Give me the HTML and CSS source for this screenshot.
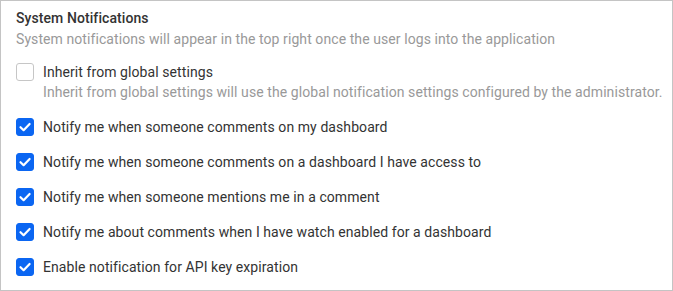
FILE: index.html
```html
<!DOCTYPE html>
<html>
<head>
<meta charset="utf-8">
<link rel="stylesheet" href="styles.css">
</head>
<body>
<div class="panel">
  <div class="title">System Notifications</div>
  <div class="subtitle">System notifications will appear in the top right once the user logs into the application</div>
  <div class="options">
    <div class="option">
      <span class="box"></span>
      <div class="texts">
        <div class="label">Inherit from global settings</div>
        <div class="desc">Inherit from global settings will use the global notification settings configured by the administrator.</div>
      </div>
    </div>
    <div class="option">
      <span class="box checked"><svg viewBox="0 0 18 18" width="18" height="18"><path d="M4.5 9.2 L7.6 12.2 L13.6 6" fill="none" stroke="#fff" stroke-width="2.2" stroke-linecap="round" stroke-linejoin="round"/></svg></span>
      <div class="texts"><div class="label">Notify me when someone comments on my dashboard</div></div>
    </div>
    <div class="option">
      <span class="box checked"><svg viewBox="0 0 18 18" width="18" height="18"><path d="M4.5 9.2 L7.6 12.2 L13.6 6" fill="none" stroke="#fff" stroke-width="2.2" stroke-linecap="round" stroke-linejoin="round"/></svg></span>
      <div class="texts"><div class="label">Notify me when someone comments on a dashboard I have access to</div></div>
    </div>
    <div class="option">
      <span class="box checked"><svg viewBox="0 0 18 18" width="18" height="18"><path d="M4.5 9.2 L7.6 12.2 L13.6 6" fill="none" stroke="#fff" stroke-width="2.2" stroke-linecap="round" stroke-linejoin="round"/></svg></span>
      <div class="texts"><div class="label">Notify me when someone mentions me in a comment</div></div>
    </div>
    <div class="option">
      <span class="box checked"><svg viewBox="0 0 18 18" width="18" height="18"><path d="M4.5 9.2 L7.6 12.2 L13.6 6" fill="none" stroke="#fff" stroke-width="2.2" stroke-linecap="round" stroke-linejoin="round"/></svg></span>
      <div class="texts"><div class="label">Notify me about comments when I have watch enabled for a dashboard</div></div>
    </div>
    <div class="option">
      <span class="box checked"><svg viewBox="0 0 18 18" width="18" height="18"><path d="M4.5 9.2 L7.6 12.2 L13.6 6" fill="none" stroke="#fff" stroke-width="2.2" stroke-linecap="round" stroke-linejoin="round"/></svg></span>
      <div class="texts"><div class="label">Enable notification for API key expiration</div></div>
    </div>
  </div>
</div>
</body>
</html>
```
FILE: styles.css
```css
html, body {
  margin: 0;
  padding: 0;
  background: #fff;
}
body {
  font-family: Roboto, "Liberation Sans", sans-serif;
  font-size: 14px;
  letter-spacing: 0.08px;
  color: #333;
}
.panel {
  width: 673px;
  height: 291px;
  box-sizing: border-box;
  border: 1px solid #c4c4c4;
  padding: 7px 8px 0 15px;
  overflow: hidden;
}
.title {
  font-weight: 500;
  line-height: 21px;
  color: #333;
}
.subtitle {
  line-height: 21px;
  color: #999;
  white-space: nowrap;
}
.options {
  margin-top: 13px;
  display: flex;
  flex-direction: column;
  gap: 16px;
}
.option {
  display: flex;
  align-items: flex-start;
}
.box {
  width: 18px;
  height: 18px;
  box-sizing: border-box;
  border: 1px solid #c6c6c6;
  border-radius: 3px;
  margin-right: 9px;
  flex: none;
  background: #fff;
  display: flex;
  align-items: center;
  justify-content: center;
}
.box.checked {
  background: #0b66f2;
  border-color: #0b66f2;
}
.box svg {
  display: block;
  flex: none;
}
.texts {
  white-space: nowrap;
}
.label {
  line-height: 19px;
  color: #333;
}
.desc {
  line-height: 20px;
  color: #999;
}
```
